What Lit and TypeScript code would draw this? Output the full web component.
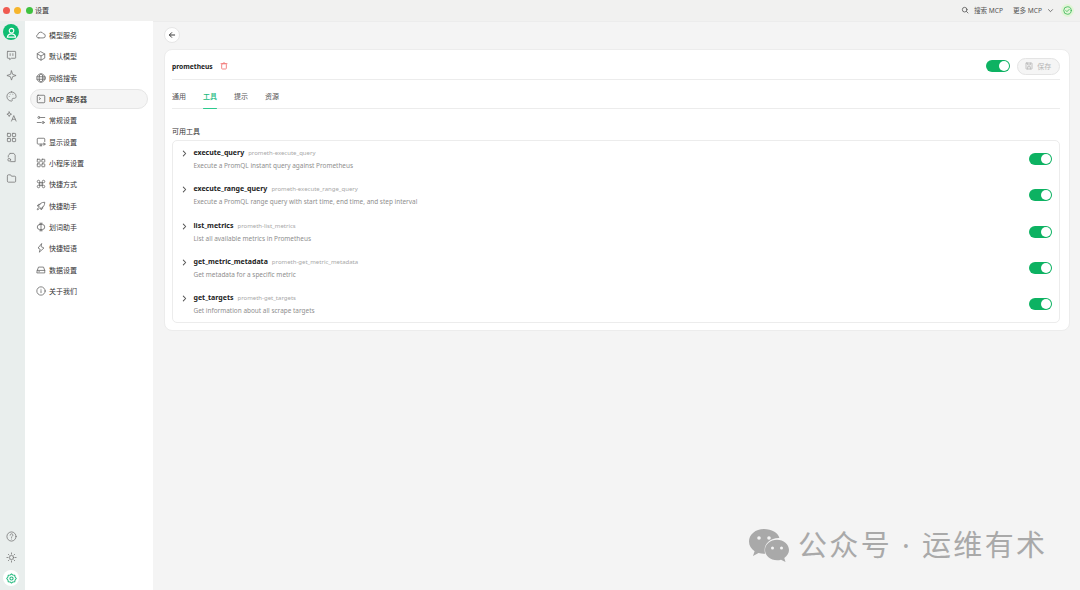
import { LitElement, html, css, svg } from "lit";
import { customElement } from "lit/decorators.js";

const ic = (body: unknown, size = 11, sw = 1) => html`<svg width=${size} height=${size} viewBox="0 0 24 24" fill="none" stroke="currentColor" stroke-width=${sw * 24 / size * 0.8} stroke-linecap="round" stroke-linejoin="round">${body}</svg>`;

const icons: Record<string, unknown> = {
  cloud: svg`<path d="M7 19h10a5 5 0 0 0 .6-10A7 7 0 0 0 4.4 11 4.2 4.2 0 0 0 7 19z"/>`,
  cube: svg`<path d="M12 2l9 5v10l-9 5-9-5V7z"/><path d="M3 7l9 5 9-5M12 12v10"/>`,
  globe: svg`<circle cx="12" cy="12" r="10"/><ellipse cx="12" cy="12" rx="4.5" ry="10"/><path d="M2.5 9h19M2.5 15h19"/>`,
  term: svg`<rect x="3" y="3" width="18" height="18" rx="2"/><path d="M8 9l3 2-3 2"/>`,
  sliders: svg`<circle cx="7" cy="6" r="2.5"/><path d="M12 6h9M3 18h9"/><circle cx="17" cy="18" r="2.5"/>`,
  monitor: svg`<path d="M21 11V5a2 2 0 0 0-2-2H5a2 2 0 0 0-2 2v10a2 2 0 0 0 2 2h9M9 21h5M12 17v4"/><circle cx="19" cy="17" r="2.5"/>`,
  apps: svg`<rect x="3" y="3" width="7" height="7" rx="1"/><rect x="14" y="3" width="7" height="7" rx="1"/><rect x="3" y="14" width="7" height="7" rx="1"/><rect x="14" y="14" width="7" height="7" rx="1"/>`,
  cmd: svg`<path d="M9 9h6v6H9zM9 9V6a3 3 0 1 0-3 3h3zM15 9V6a3 3 0 1 1 3 3h-3zM9 15v3a3 3 0 1 1-3-3h3zM15 15v3a3 3 0 1 0 3-3h-3z"/>`,
  rocket: svg`<path d="M9 15l-3-3c2-5 7-9 15-9 0 8-4 13-9 15z"/><path d="M6 12H3l3-4h4M12 18v3l4-3v-4M6 16c-2 1-3 3-3 5 2 0 4-1 5-3"/>`,
  select: svg`<rect x="3" y="6" width="18" height="12" rx="6"/><path d="M12 3v18M9 3h6M9 21h6"/>`,
  bolt: svg`<path d="M13 2L5 12l5 3-2 7 11-10-6-3z"/>`,
  drive: svg`<path d="M3 13l3-8h12l3 8v6H3z"/><path d="M3 13h18M7 16h1"/>`,
  info: svg`<circle cx="12" cy="12" r="10"/><path d="M12 11v5M12 8h.01"/>`,
  chat: svg`<path d="M4 3h16a1 1 0 0 1 1 1v13a1 1 0 0 1-1 1h-8l-4 3v-3H4a1 1 0 0 1-1-1V4a1 1 0 0 1 1-1z"/><path d="M9 8v4M15 8v4"/>`,
  spark: svg`<path d="M12 2l2.5 7.5L22 12l-7.5 2.5L12 22l-2.5-7.5L2 12l7.5-2.5z"/>`,
  palette: svg`<path d="M12 2a10 10 0 1 0 0 20c2 0 2-2 1.5-3-.6-1.400 .5-3 2-3h3c2 0 3.500-1.500 3.500-4C22 6 17.500 2 12 2z"/><path d="M7 12h.01M9 7h.01M15 7h.01"/>`,
  trans: svg`<path d="M7 2l1.500 3.500L12 7 8.500 8.500 7 12 5.500 8.500 2 7l3.500-1.500zM12 22l5-12 5 12M14 18h6"/>`,
  file: svg`<path d="M9 3h8l3 4v14H10M9 3L5 8v3"/><circle cx="7" cy="17" r="3"/>`,
  folder: svg`<path d="M3 6a2 2 0 0 1 2-2h5l2 3h7a2 2 0 0 1 2 2v9a2 2 0 0 1-2 2H5a2 2 0 0 1-2-2z"/>`,
  help: svg`<circle cx="12" cy="12" r="10"/><path d="M9 9a3 3 0 1 1 4.500 2.600c-1 .6-1.500 1.200-1.500 2.400M12 17.500h.01"/>`,
  sun: svg`<circle cx="12" cy="12" r="4.500"/><path d="M12 2v2.500M12 19.500V22M2 12h2.500M19.500 12H22M5 5l1.800 1.800M17.200 17.200L19 19M5 19l1.800-1.800M17.200 6.800L19 5"/>`,
  gear: svg`<path d="M12 2l3 2.500 4 .3.8 3.900L22.500 12l-2.700 3.300-.8 3.900-4 .3L12 22l-3-2.500-4-.3-.8-3.900L1.500 12l2.700-3.300.8-3.900 4-.3z"/><circle cx="12" cy="12" r="3.500"/>`,
  search: svg`<circle cx="11" cy="11" r="7"/><path d="M16.500 16.500L21 21"/>`,
  down: svg`<path d="M5 9l7 7 7-7"/>`,
  right: svg`<path d="M8 4l8 8-8 8"/>`,
  back: svg`<path d="M20 12H5M11 5l-7 7 7 7"/>`,
  trash: svg`<rect x="5" y="5" width="14" height="16" rx="2"/><path d="M3 5h18M9 5V3h6v2"/>`,
  save: svg`<rect x="3" y="3" width="18" height="18" rx="1"/><path d="M8 3v6h8V3M8 21v-7h8v7"/>`,
  check: svg`<circle cx="12" cy="12" r="10"/><path d="M7.500 12l3 3 6-6"/>`,
};

const nav = [
  ["cloud", "模型服务"], ["cube", "默认模型"], ["globe", "网络搜索"], ["term", "MCP 服务器"],
  ["sliders", "常规设置"], ["monitor", "显示设置"], ["apps", "小程序设置"], ["cmd", "快捷方式"],
  ["rocket", "快捷助手"], ["select", "划词助手"], ["bolt", "快捷短语"], ["drive", "数据设置"], ["info", "关于我们"],
];

const tools = [
  ["execute_query", "prometh-execute_query", "Execute a PromQL instant query against Prometheus"],
  ["execute_range_query", "prometh-execute_range_query", "Execute a PromQL range query with start time, end time, and step interval"],
  ["list_metrics", "prometh-list_metrics", "List all available metrics in Prometheus"],
  ["get_metric_metadata", "prometh-get_metric_metadata", "Get metadata for a specific metric"],
  ["get_targets", "prometh-get_targets", "Get information about all scrape targets"],
];

const rail = ["chat", "spark", "palette", "trans", "apps", "file", "folder"];

@customElement("app-root")
export class AppRoot extends LitElement {
  static styles = css`
    :host { display: block; width: 1080px; height: 590px; overflow: hidden; font-family: "Noto Sans", "Noto Sans CJK SC", sans-serif; color: #222; background: #f4f4f4; position: relative; }
    .title { height: 21px; background: #f1f1f0; display: flex; align-items: center; box-sizing: border-box; padding: 0 6px 1px 3px; }
    .dot { width: 7px; height: 7px; border-radius: 50%; margin-right: 4.300px; }
    .title .name { font-size: 7px; color: #333; margin-left: -2px; }
    .spacer { flex: 1; }
    .tbtn { display: flex; align-items: center; gap: 5px; font-size: 6.600px; color: #555; }
    .tbtn.more { margin-left: 10px; gap: 5px; }
    .status { width: 13px; height: 13px; border-radius: 50%; background: #e2f5d8; color: #35b552; margin-left: 7px; display: flex; align-items: center; justify-content: center; }
    .body { display: flex; height: 569px; }
    .rail { width: 25px; padding-right: 3px; box-sizing: border-box; background: #e9eeed; display: flex; flex-direction: column; align-items: center; color: #777; flex: none; }
    .avatar { width: 16px; height: 16px; border-radius: 50%; background: #0fbd72; color: #fff; display: flex; align-items: center; justify-content: center; margin-top: 3px; margin-bottom: 5px; }
    .ri { height: 20.500px; display: flex; align-items: center; justify-content: center; }
    .rbottom { margin-top: auto; display: flex; flex-direction: column; align-items: center; gap: 4px; padding-bottom: 4px; }
    .rbottom .ri { height: 17px; }
    .gearbtn { width: 16px; height: 16px; border-radius: 50%; background: #fff; color: #1fb87c; display: flex; align-items: center; justify-content: center; }
    .side { width: 128px; background: #fff; flex: none; box-sizing: border-box; padding: 3.300px 5px; display: flex; flex-direction: column; }
    .ni { height: 21.350px; display: flex; align-items: center; gap: 3px; padding-left: 5px; font-size: 7px; color: #333; box-sizing: border-box; border-radius: 10px; border: 1px solid transparent; flex: none; }
    .ni svg { color: #666; }
    .ni.active { background: #f5f5f5; border-color: #e6e6e6; height: 20px; margin: .675px 0; font-weight: 500; }
    .main { flex: 1; border-top: 1px solid #ececec; box-sizing: border-box; padding: 5px 11px 0; }
    .back { width: 16px; height: 16px; margin-left: -.500px; border-radius: 50%; background: #fff; border: 1px solid #e6e6e6; box-sizing: border-box; display: flex; align-items: center; justify-content: center; color: #333; }
    .card { margin-top: 6px; width: 905.500px; height: 282px; background: #fff; border: 1px solid #ececec; box-sizing: border-box; border-radius: 8px; padding: 0 8.500px 0 7px; }
    .head { height: 29.500px; box-sizing: border-box; padding-top: 4px; display: flex; align-items: center; border-bottom: 1px solid #ececec; }
    .head b { font-size: 6.700px; font-weight: 700; color: #222; }
    .del { color: #f28080; margin-left: 7px; display: flex; }
    .sw { width: 23.500px; height: 12px; background: #0db262; border-radius: 6px; position: relative; flex: none; }
    .sw::after { content: ""; position: absolute; right: 1px; top: 1px; width: 10px; height: 10px; background: #fff; border-radius: 50%; }
    .save { width: 43.500px; height: 17px; margin-left: 7px; box-sizing: border-box; border: 1px solid #e4e4e4; background: #f5f5f5; border-radius: 9px; color: #b5b5b5; font-size: 7px; display: flex; align-items: center; justify-content: center; gap: 4px; }
    .tabs { height: 29.500px; box-sizing: border-box; display: flex; gap: 17px; border-bottom: 1px solid #ececec; font-size: 7px; color: #555; }
    .tab { height: 29px; box-sizing: border-box; display: flex; align-items: center; padding-top: 4.500px; position: relative; }
    .tab.on { color: #17b97c; font-weight: 500; }
    .tab.on::after { content: ""; position: absolute; left: 0; right: 0; bottom: -.500px; height: 1.500px; background: #2cc98d; border-radius: 1px; }
    .sect { font-size: 7px; color: #333; margin-top: 17px; line-height: 11px; }
    .list { margin-top: 3px; height: 183px; box-sizing: border-box; border: 1px solid #ececec; border-radius: 5px; padding: 0 0 0 7.500px; }
    .row { height: 36.300px; display: flex; align-items: center; }
    .chev { width: 7px; color: #555; margin-right: 6px; align-self: flex-start; margin-top: 9px; display: flex; }
    .txt { flex: 1; display: flex; flex-direction: column; gap: 1px; }
    .l1 { display: flex; align-items: baseline; gap: 4px; line-height: 11px; }
    .l1 b { font-size: 7px; color: #222; font-weight: 700; }
    .l1 span { font-size: 6px; color: #a8a8a8; }
    .desc { font-size: 6.450px; color: #8e8e8e; line-height: 11px; }
    .row .sw { margin-right: 7px; }
    .wm { position: absolute; left: 748px; top: 528px; display: flex; align-items: center; gap: 8px; color: #a9a9a9; font-size: 29px; letter-spacing: 2.350px; line-height: 34px; }
  `;

  render() {
    return html`
      <div class="title">
        <i class="dot" style="background:#f05a50"></i><i class="dot" style="background:#f6b52c"></i><i class="dot" style="background:#3fc23f"></i>
        <span class="name">设置</span>
        <span class="spacer"></span>
        <span class="tbtn">${ic(icons.search, 8)}<span>搜索 MCP</span></span>
        <span class="tbtn more"><span>更多 MCP</span>${ic(icons.down, 7)}</span>
        <span class="status">${ic(icons.check, 9)}</span>
      </div>
      <div class="body">
        <div class="rail">
          <div class="avatar">
            <svg width="11" height="11" viewBox="0 0 24 24" fill="none" stroke="currentColor" stroke-width="2.400" stroke-linecap="round"><circle cx="12" cy="8" r="5"/><path d="M3 22c1-5 4.500-7 9-7s8 2 9 7z"/></svg>
          </div>
          ${rail.map((r) => html`<div class="ri">${ic(icons[r], 11)}</div>`)}
          <div class="rbottom">
            <div class="ri">${ic(icons.help, 11)}</div>
            <div class="ri">${ic(icons.sun, 11)}</div>
            <div class="gearbtn">${ic(icons.gear, 11, 1.300)}</div>
          </div>
        </div>
        <div class="side">
          ${nav.map(([i, t]) => html`<div class="ni ${t.startsWith("MCP") ? "active" : ""}">${ic(icons[i], 10)}<span>${t}</span></div>`)}
        </div>
        <div class="main">
          <div class="back">${ic(icons.back, 8, 1.200)}</div>
          <div class="card">
            <div class="head">
              <b>prometheus</b>
              <span class="del">${ic(icons.trash, 8, 1.200)}</span>
              <span class="spacer"></span>
              <span class="sw"></span>
              <span class="save">${ic(icons.save, 8)}<span>保存</span></span>
            </div>
            <div class="tabs">
              <span class="tab">通用</span><span class="tab on">工具</span><span class="tab">提示</span><span class="tab">资源</span>
            </div>
            <div class="sect">可用工具</div>
            <div class="list">
              ${tools.map(([n, id, d]) => html`
                <div class="row">
                  <span class="chev">${ic(icons.right, 7, 1.300)}</span>
                  <div class="txt">
                    <div class="l1"><b>${n}</b><span>${id}</span></div>
                    <div class="desc">${d}</div>
                  </div>
                  <span class="sw"></span>
                </div>`)}
            </div>
          </div>
        </div>
      </div>
      <div class="wm">
        <svg width="42" height="34" viewBox="0 0 42 34" fill="#a9a9a9">
          <path d="M16 1C7.500 1 1 6.500 1 13.500c0 4 2.200 7.400 5.600 9.700L5 28l5.500-3c1.800.5 3.600.8 5.500.8.400 0 .8 0 1.200-.1-.4-1.200-.6-2.400-.6-3.700 0-6.700 6.200-12 13.800-12h1C30 4.700 23.600 1 16 1z"/>
          <path d="M41 22c0-5.700-5.500-10.300-12-10.300S17 16.300 17 22s5.500 10.300 12 10.300c1.400 0 2.800-.2 4-.6l4.500 2.300-1.200-4C39.200 27.900 41 25.100 41 22z"/>
          <circle cx="11" cy="10" r="1.800" fill="#f4f4f4"/><circle cx="21" cy="10" r="1.800" fill="#f4f4f4"/>
          <circle cx="24.500" cy="20" r="1.500" fill="#f4f4f4"/><circle cx="33.500" cy="20" r="1.500" fill="#f4f4f4"/>
        </svg>
        <span>公众号 · 运维有术</span>
      </div>
    `;
  }
}
